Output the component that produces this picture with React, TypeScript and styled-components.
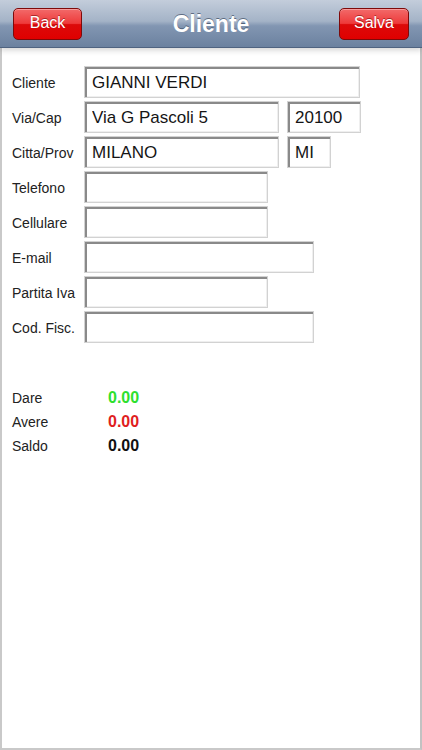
import styled, { createGlobalStyle } from 'styled-components';

const GlobalStyle = createGlobalStyle`
  html, body {
    margin: 0;
    padding: 0;
    background: #ffffff;
    font-family: "Liberation Sans", Arial, sans-serif;
  }
`;

const Screen = styled.div`
  width: 422px;
  height: 750px;
  box-sizing: border-box;
  display: flex;
  flex-direction: column;
  background: #ffffff;
  border-left: 2px solid #c9c9c9;
  border-right: 2px solid #c2c2c2;
  border-bottom: 2px solid #c9c9c9;
`;

const NavBar = styled.header`
  height: 48px;
  margin: 0 -2px;
  padding: 1px 13px 0;
  box-sizing: border-box;
  display: grid;
  grid-template-columns: 1fr auto 1fr;
  align-items: center;
  background: linear-gradient(to bottom, #c3cddb 0%, #a4b3c7 45%, #8296b2 55%, #6b819f 100%);
  border-bottom: 1px solid #4f6380;
  box-shadow: 0 2px 6px rgba(0, 0, 0, 0.18);
  position: relative;
  z-index: 1;
`;

const Title = styled.h1`
  margin: 0;
  font-size: 23px;
  font-weight: bold;
  color: #ffffff;
  text-shadow: 0 -1px 0 rgba(40, 55, 80, 0.6);
`;

const NavButton = styled.button<{ $side: 'left' | 'right' }>`
  justify-self: ${({ $side }) => ($side === 'left' ? 'start' : 'end')};
  width: ${({ $side }) => ($side === 'left' ? '69px' : '70px')};
  height: 32px;
  padding: 0 0 2px;
  border: 1px solid #7e0a0a;
  border-radius: 5px;
  background: linear-gradient(to bottom, #f26a6a 0%, #ee3a3a 48%, #dc0a0a 52%, #e00000 100%);
  box-shadow: inset 0 1px 0 rgba(255, 255, 255, 0.35);
  color: #ffffff;
  font-family: "Liberation Sans", Arial, sans-serif;
  font-size: 16px;
  text-shadow: 0 -1px 0 rgba(100, 0, 0, 0.5);
`;

const Form = styled.div`
  padding: 18px 0 0 10px;
  display: flex;
  flex-direction: column;
  gap: 3px;
`;

const Row = styled.div`
  display: flex;
  align-items: center;
  height: 32px;
`;

const Label = styled.span`
  width: 72px;
  flex-shrink: 0;
  font-size: 14px;
  color: #222222;
  padding-top: 1px;
`;

const Field = styled.input<{ $w: number }>`
  width: ${({ $w }) => $w}px;
  height: 32px;
  box-sizing: border-box;
  margin: 0 8px 0 0;
  padding: 2px 0 0 7px;
  border: 1px solid #d2d2d2;
  box-shadow: inset 2px 2px 0 #8a8a8a, inset -1px -1px 0 #efefef;
  background: #ffffff;
  font-family: "Liberation Sans", Arial, sans-serif;
  font-size: 17px;
  color: #151515;
  outline: none;
`;

const Summary = styled.div`
  margin-top: 43px;
  padding-left: 10px;
  display: flex;
  flex-direction: column;
`;

const SumRow = styled.div`
  display: flex;
  align-items: center;
  height: 24px;
`;

const SumLabel = styled.span`
  width: 96px;
  font-size: 14px;
  color: #222222;
`;

const SumValue = styled.span<{ $color: string }>`
  font-size: 16px;
  font-weight: bold;
  color: ${({ $color }) => $color};
`;

type FieldDef = { w: number; value: string };
const rows: { label: string; fields: FieldDef[] }[] = [
  { label: 'Cliente', fields: [{ w: 276, value: 'GIANNI VERDI' }] },
  { label: 'Via/Cap', fields: [{ w: 195, value: 'Via G Pascoli 5' }, { w: 74, value: '20100' }] },
  { label: 'Citta/Prov', fields: [{ w: 195, value: 'MILANO' }, { w: 44, value: 'MI' }] },
  { label: 'Telefono', fields: [{ w: 184, value: '' }] },
  { label: 'Cellulare', fields: [{ w: 184, value: '' }] },
  { label: 'E-mail', fields: [{ w: 230, value: '' }] },
  { label: 'Partita Iva', fields: [{ w: 184, value: '' }] },
  { label: 'Cod. Fisc.', fields: [{ w: 230, value: '' }] },
];

const totals = [
  { label: 'Dare', value: '0.00', color: '#2ee02e' },
  { label: 'Avere', value: '0.00', color: '#e01e1e' },
  { label: 'Saldo', value: '0.00', color: '#111111' },
];

export default function App() {
  return (
    <>
      <GlobalStyle />
      <Screen>
        <NavBar>
          <NavButton $side="left">Back</NavButton>
          <Title>Cliente</Title>
          <NavButton $side="right">Salva</NavButton>
        </NavBar>
        <Form>
          {rows.map((r) => (
            <Row key={r.label}>
              <Label>{r.label}</Label>
              {r.fields.map((f, i) => (
                <Field key={i} $w={f.w} value={f.value} readOnly />
              ))}
            </Row>
          ))}
        </Form>
        <Summary>
          {totals.map((t) => (
            <SumRow key={t.label}>
              <SumLabel>{t.label}</SumLabel>
              <SumValue $color={t.color}>{t.value}</SumValue>
            </SumRow>
          ))}
        </Summary>
      </Screen>
    </>
  );
}
